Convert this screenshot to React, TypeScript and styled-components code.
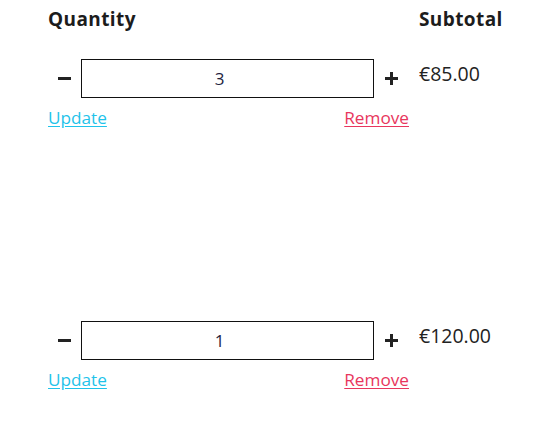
import React, { useState } from "react";
import styled, { createGlobalStyle } from "styled-components";

const Global = createGlobalStyle`
  html, body { margin: 0; padding: 0; background: #fff; }
  body { font-family: "Open Sans", "Liberation Sans", sans-serif; color: #222; }
`;

const Table = styled.div`
  display: grid;
  grid-template-columns: 362px auto;
  column-gap: 9px;
  padding: 6px 0 0 48px;
`;

const HeadCell = styled.div`
  font-size: 19px;
  font-weight: 700;
  line-height: 26px;
  color: #1c1c1c;
  letter-spacing: 0.4px;
  height: 53px;
`;

const QtyCell = styled.div`
  display: flex;
  flex-direction: column;
  height: 262px;
`;

const Controls = styled.div`
  display: flex;
  align-items: center;
  height: 39px;
`;

const StepButton = styled.button<{ $w: number }>`
  width: ${(p) => p.$w}px;
  height: 39px;
  padding: 0;
  border: none;
  background: none;
  display: flex;
  align-items: center;
  justify-content: center;
  cursor: pointer;
  color: #222;
`;

const QtyInput = styled.input`
  box-sizing: border-box;
  width: 293px;
  height: 39px;
  border: 1px solid #111;
  text-align: center;
  font-family: "Open Sans", "Liberation Sans", sans-serif;
  font-size: 17px;
  color: #1e1e40;
  padding: 0 16px 0 0;
  outline: none;
`;

const Links = styled.div`
  display: flex;
  justify-content: space-between;
  width: 361px;
  margin-top: 8px;
`;

const Link = styled.a<{ $color: string }>`
  font-size: 17.2px;
  line-height: 24px;
  color: ${(p) => p.$color};
  text-decoration: underline;
  text-underline-offset: 2px;
  cursor: pointer;
`;

const Price = styled.div`
  font-size: 19.5px;
  line-height: 26px;
  padding-top: 2px;
  color: #222;
`;

const Minus = () => (
  <svg width="13" height="13" viewBox="0 0 13 13">
    <rect x="0" y="5" width="13" height="3" fill="currentColor" />
  </svg>
);

const Plus = () => (
  <svg width="13" height="13" viewBox="0 0 13 13">
    <rect x="0" y="5" width="13" height="3" fill="currentColor" />
    <rect x="5" y="0" width="3" height="13" fill="currentColor" />
  </svg>
);

const Row = ({ qty, price }: { qty: number; price: string }) => {
  const [q, setQ] = useState(qty);
  return (
    <>
      <QtyCell>
        <Controls>
          <StepButton $w={33} onClick={() => setQ(Math.max(1, q - 1))}>
            <Minus />
          </StepButton>
          <QtyInput value={q} onChange={(e) => setQ(Number(e.target.value) || 0)} />
          <StepButton $w={35} onClick={() => setQ(q + 1)}>
            <Plus />
          </StepButton>
        </Controls>
        <Links>
          <Link $color="#1fc3ea">Update</Link>
          <Link $color="#e8365d">Remove</Link>
        </Links>
      </QtyCell>
      <Price>{price}</Price>
    </>
  );
};

export default function App() {
  return (
    <>
      <Global />
      <Table>
        <HeadCell>Quantity</HeadCell>
        <HeadCell>Subtotal</HeadCell>
        <Row qty={3} price="€85.00" />
        <Row qty={1} price="€120.00" />
      </Table>
    </>
  );
}
